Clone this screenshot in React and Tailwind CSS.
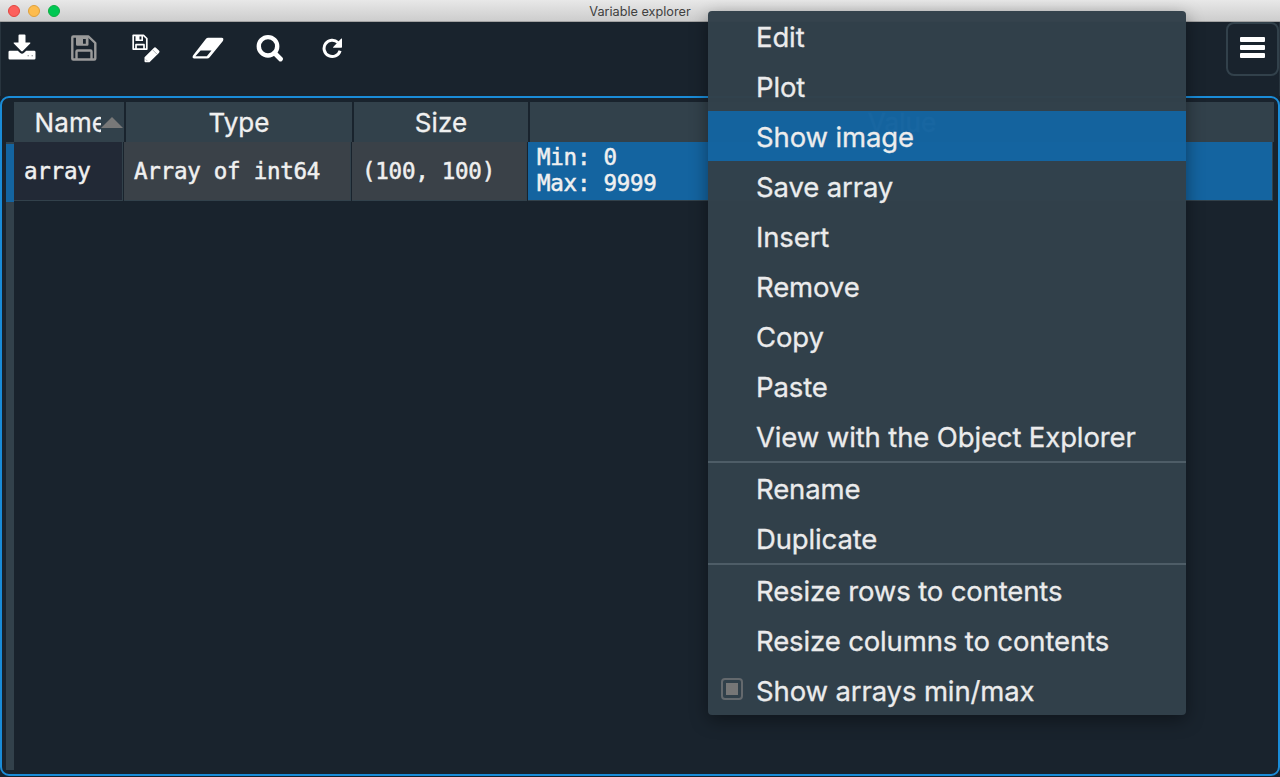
const svgBase = "block shrink-0";

function DownloadIcon() {
  return (
    <svg className={svgBase} width="28" height="28" viewBox="0 0 28 28">
      <path fill="#fff" d="M11.500.5h5q1 0 1 1v7h4.200q1.300 0 .5 1l-7.400 7.600q-.8.8-1.600 0L5.800 9.500q-.8-1 .5-1h4.200v-7q0-1 1-1zM1.800 16.700h8l2.400 2.300q1.800 1.500 3.600 0l2.400-2.300h8q1.300 0 1.300 1.300v6.200q0 1.300-1.300 1.300H1.800q-1.300 0-1.300-1.300V18q0-1.300 1.300-1.300z" />
      <path fill="#8c9196" d="M19.500 21.300h1.500v1h-1.500zM23.500 21.300H25v1h-1.500z" />
    </svg>
  );
}

function SaveIcon() {
  return (
    <svg className={svgBase} width="26" height="26" viewBox="0 0 26 26">
      <path fill="none" stroke="#9a9a9a" strokeWidth="2.400" strokeLinejoin="round" d="M2.300 1.500H17.500L24.300 8v15.500q0 1-1 1h-21q-1 0-1-1v-21q0-1 1-1zM5.500 24v-7.500q0-1 1-1h13q1 0 1 1V24" />
      <path fill="#9a9a9a" fillRule="evenodd" d="M5 1h12.500v8.500q0 1.200-1.200 1.200H6.200Q5 10.700 5 9.500zM12 4v4.800h2.800V4z" />
    </svg>
  );
}

function SaveAsIcon() {
  return (
    <svg className={svgBase} width="28" height="29" viewBox="0 0 28 29">
      <path fill="none" stroke="#fff" strokeWidth="1.700" strokeLinejoin="round" d="M1.200 1.300h10.300l3.300 3.200v10.600H1.200zM4 15v-4.300h8V15" />
      <path fill="#fff" fillRule="evenodd" d="M3.500 1.300h7.500v5.700H3.500zM7.500 2.300v3.200h1.900V2.300z" />
      <path fill="#fff" d="M12.500 23.300 21.800 13.900q1.200-1.200 2.400 0l2.700 2.700q1.200 1.200 0 2.400L17.500 28.300h-4q-1 0-1-1z" />
      <path fill="none" stroke="#8b9095" strokeWidth=".7" d="m20.800 16 4 4M13.800 25.500l1.600 1.600" />
    </svg>
  );
}

function EraserIcon() {
  return (
    <svg className={svgBase} width="32" height="23" viewBox="0 0 32 23">
      <path fill="#fff" fillRule="evenodd" d="M16.200.8h13.600q2.200.2 1.300 2.600-.2.600-.6 1L17.700 20.300q-1 1.200-2.600 1.200H2.200Q0 21.300.8 19q.2-.5.600-1L13.800 2q1-1.200 2.400-1.200zM8.600 13.500 3.400 19.300h11.400l4.700-5.800z" />
    </svg>
  );
}

function SearchIcon() {
  return (
    <svg className={svgBase} width="28" height="28" viewBox="0 0 28 28">
      <circle cx="12" cy="12.300" r="9.200" fill="none" stroke="#fff" strokeWidth="4.400" />
      <path d="m18.500 19 6 6" stroke="#fff" strokeWidth="4.800" strokeLinecap="round" />
    </svg>
  );
}

function RefreshIcon() {
  return (
    <svg className={svgBase} width="21" height="21" viewBox="0 0 21 21">
      <path fill="none" stroke="#fff" strokeWidth="3" d="M16 4.500A8.200 8.200 0 1 0 18.100 12.800" />
      <path fill="#fff" d="M19.300.6q.7-.5.700.3v8.200q0 .7-.7.700h-7.700q-1.200 0-.4-.8z" />
    </svg>
  );
}

function TitleBar() {
  return (
    <header className="flex h-[22px] shrink-0 items-center border-b border-[#a2a2a2] bg-linear-to-b from-[#e8e8e8] to-[#cdcdcd] pl-2">
      <div className="flex flex-1 gap-2">
        <i className="size-3 rounded-full border border-[#e2463f] bg-[#fc605c]" />
        <i className="size-3 rounded-full border border-[#dfa03b] bg-[#fdbc4e]" />
        <i className="size-3 rounded-full border border-[#0ead42] bg-[#00c853]" />
      </div>
      <h1 className="pt-[2px] text-[12.700px] leading-5 font-normal text-[#404040]">Variable explorer</h1>
      <div className="flex-1 pr-2" />
    </header>
  );
}

function Toolbar() {
  return (
    <div className="flex h-[74px] shrink-0 items-start justify-between border-x border-[#28343e]">
      <div className="flex h-[52px] items-center">
        <button className="flex w-[52px] pl-[7px]"><DownloadIcon /></button>
        <button className="flex w-[62px] justify-center"><SaveIcon /></button>
        <button className="flex w-[62px] justify-center"><SaveAsIcon /></button>
        <button className="flex w-[62px] justify-center"><EraserIcon /></button>
        <button className="flex w-[62px] justify-center"><SearchIcon /></button>
        <button className="flex w-[62px] justify-center"><RefreshIcon /></button>
      </div>
      <button className="flex h-[54px] w-[53px] flex-col items-center justify-center gap-[3px] rounded-lg border-2 border-[#32414b] pr-px pb-[3px]">
        <i className="h-[5px] w-[25px] rounded-[1px] bg-white" />
        <i className="h-[5px] w-[25px] rounded-[1px] bg-white" />
        <i className="h-[5px] w-[25px] rounded-[1px] bg-white" />
      </button>
    </div>
  );
}

const head = "flex h-10 items-center justify-center bg-[#32414b] pt-px text-[26px] tracking-[0.1px] [-webkit-text-stroke:0.3px_#f0f0f0]";
const cell = "flex h-[59px] items-center border-r border-b border-[#32414b] pl-[10px]";

function VariableTable() {
  return (
    <main className="mb-px flex min-h-0 flex-1 rounded-[9px] border-2 border-[#1a8cd8] pt-1 pb-[4px] pl-1">
      <div className="flex w-2 shrink-0 flex-col bg-[#32414b]">
        <div className="h-[42px] border-b-2 border-[#32414b] bg-[#19232d]" />
        <div className="h-[58px] bg-[#1464a0]" />
      </div>
      <div className="flex-1 text-[#f0f0f0]">
        <div className="flex gap-0.5">
          <div className={head + " w-[110px] pl-[19px]"}>
            <span className="w-[66px] overflow-hidden">Name</span>
            <svg className="shrink-0" width="22" height="11" viewBox="0 0 22 11">
              <path d="M0 11 11 0l11 11z" fill="#787878" />
            </svg>
          </div>
          <div className={head + " w-[226px]"}>Type</div>
          <div className={head + " w-[174px]"}>Size</div>
          <div className={head + " w-[744px]"}>Value</div>
        </div>
        <div className="flex font-['DejaVu_Sans_Mono',monospace] text-[22.500px] leading-[26px] tracking-[-0.250px] [-webkit-text-stroke:0.5px_#f0f0f0]">
          <div className={cell + " mr-px w-[109px] bg-[#222936]"}>array</div>
          <div className={cell + " mr-px w-[227px] bg-[#3a4148]"}>Array of int64</div>
          <div className={cell + " mr-px w-[175px] bg-[#3a4148]"}>(100, 100)</div>
          <div className="flex h-[59px] w-[745px] items-center border-r border-b border-[#32414b] bg-[#1464a0] pb-[3px] pl-[9px]">
            <div>Min: 0<br />Max: 9999</div>
          </div>
        </div>
      </div>
    </main>
  );
}

const groups = [
  ["Edit", "Plot", "Show image", "Save array", "Insert", "Remove", "Copy", "Paste", "View with the Object Explorer"],
  ["Rename", "Duplicate"],
  ["Resize rows to contents", "Resize columns to contents", "Show arrays min/max"],
];

function ContextMenu() {
  return (
    <div className="absolute top-[11px] left-[708px] w-[478px] divide-y-2 divide-[#505f69] overflow-hidden rounded-[4px] bg-[#32414b] text-[27.500px] tracking-[-0.130px] text-[#f0f0f0] opacity-[0.98] shadow-[0_5px_18px_rgba(0,0,0,0.4)] [-webkit-text-stroke:0.3px_#f0f0f0]">
      {groups.map((items) => (
        <div key={items[0]}>
          {items.map((label) => (
            <div key={label} className={label === "Show image" ? "flex h-[50px] items-center bg-[#1464a0] pt-[3px]" : "flex h-[50px] items-center pt-[3px]"}>
              <div className="flex w-12 shrink-0 pl-[13px]">
                {label === "Show arrays min/max" && (
                  <span className="mb-[5px] flex size-[22px] items-center justify-center rounded-[4px] border-2 border-[#666b6f]">
                    <i className="size-3 bg-[#787878]" />
                  </span>
                )}
              </div>
              <span className="whitespace-nowrap">{label}</span>
            </div>
          ))}
        </div>
      ))}
    </div>
  );
}

export default function App() {
  return (
    <div className="relative flex h-[777px] w-[1280px] flex-col overflow-hidden bg-[#19232d] font-[Inter,sans-serif]">
      <TitleBar />
      <Toolbar />
      <VariableTable />
      <ContextMenu />
    </div>
  );
}
